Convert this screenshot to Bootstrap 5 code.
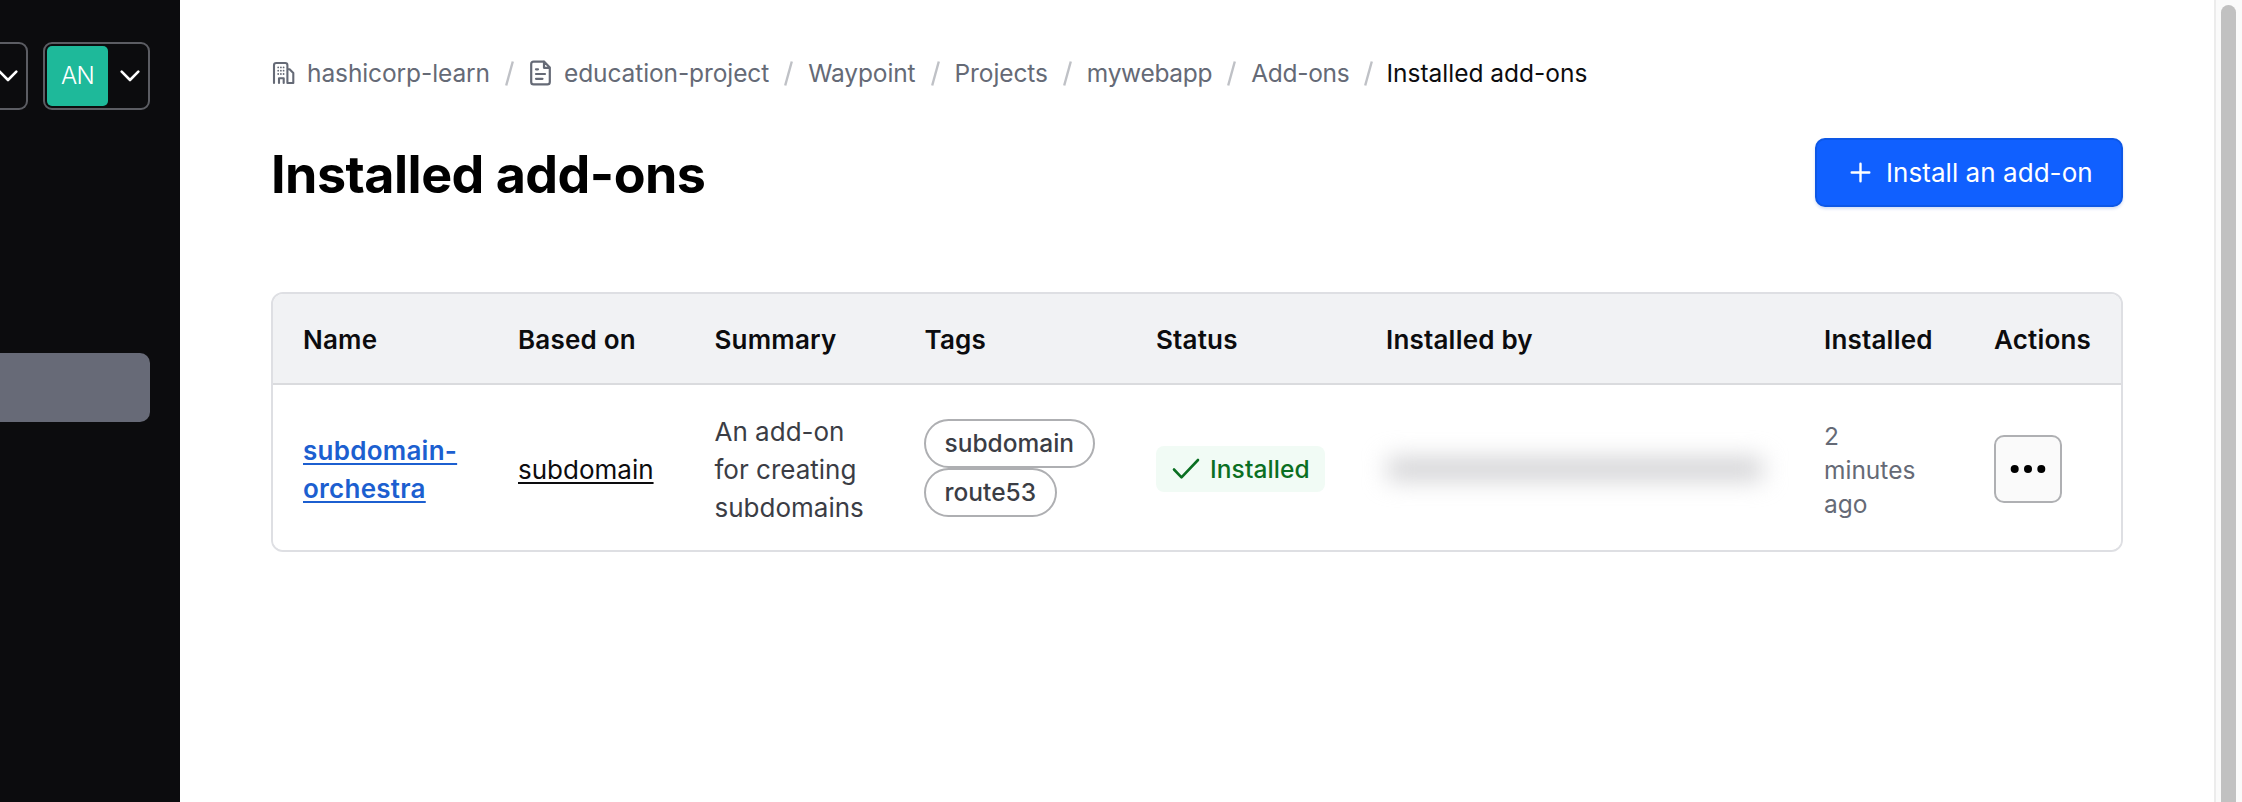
<!DOCTYPE html>
<html lang="en">
<head>
<meta charset="utf-8">
<meta name="viewport" content="width=device-width, initial-scale=1">
<title>Installed add-ons</title>
<link rel="stylesheet" href="https://cdn.jsdelivr.net/npm/bootstrap@5.3.0/dist/css/bootstrap.min.css">
<style>
  body { font-family: Inter, "Liberation Sans", sans-serif; color: #3b3d45; overflow: hidden; }
  .app-shell { height: 802px; }
  .side-panel { width: 180px; background: #0c0c0e; }
  .side-tools { padding-top: 42px; gap: 16px; }
  .tool-btn { height: 68px; border: 2px solid #5c5d63; border-radius: 9px; background: transparent; }
  .tool-org { width: 28px; padding-right: 8px; border-left: 0; border-radius: 0 9px 9px 0; overflow: hidden; }
  .tool-user { width: 107px; padding: 0 8px 0 2px; margin-left: -1px; }
  .avatar-tile { width: 61px; height: 60px; border-radius: 5px; background: #1eb99a; color: #fff; font-size: 24px; letter-spacing: -.8px; font-weight: 300; }
  .side-active { width: 150px; height: 69px; margin-top: 243px; border-radius: 0 10px 10px 0; background: #676a77; }

  .page-area { padding: 0 91px; }
  .crumbs { padding-top: 54px; height: 92px; font-size: 24.5px; line-height: 38px; color: #656a76; letter-spacing: -.1px; gap: 15px; }
  .crumbs .crumb { gap: 11px; white-space: nowrap; }
  .crumbs .crumb-tight { letter-spacing: -.3px; }
  .crumbs .crumb-current { color: #0c0c0e; letter-spacing: 0; margin-left: -2px; }
  .page-head { height: 200px; padding-top: 46px; }
  .page-title { margin: 3px 0 0 0; font-size: 52px; line-height: 68px; font-weight: 700; letter-spacing: -.52px; color: #000; }
  .btn-install { width: 308px; height: 69px; padding: 0 0 1px 33px; gap: 15px; font-size: 26px; letter-spacing: .05px; color: #fff; background: #1060ff; border: 2px solid #0d57e6; border-radius: 10px; box-shadow: 0 2px 3px rgba(20, 80, 200, .18); }

  .table-frame { height: 260px; border: 2px solid #dedfe3; border-radius: 12px; overflow: hidden; }
  .addons { table-layout: fixed; font-size: 26px; line-height: 38px; }
  .addons th, .addons td { padding: 1px 0 0 30px; vertical-align: middle; white-space: nowrap; }
  .addons th { height: 90px; padding-top: 2px; background: #f1f2f4; color: #0c0c0e; font-weight: 600; letter-spacing: .2px; border-bottom: 2px solid #dadbde; }
  .addons td { height: 166px; border: 0; background: #fff; color: #3b3d45; }
  .addons td.copy { padding-top: 4px; }
  .addons a { text-underline-offset: 3px; text-decoration-thickness: 2px; }
  .addons .link-name { color: #1c5fd0; font-weight: 600; letter-spacing: .25px; }
  .addons .link-base { color: #0c0c0e; letter-spacing: 0; }
  .tag-pill { height: 49px; padding: 0 19px 2px; margin-left: -1px; border: 2px solid #aeafb2; border-radius: 25px; font-size: 24.5px; font-weight: 500; letter-spacing: 0; }
  .status-ok { height: 46px; margin-top: 2px; padding: 0 15px 0 16px; gap: 10px; border-radius: 8px; background: #f1fbf5; color: #0a6f22; font-size: 24.5px; font-weight: 500; letter-spacing: .1px; }
  .masked { width: 374px; height: 20px; margin: 2px 0 0 2px; background: #cbcbce; filter: blur(12px); }
  .addons td.when { padding-top: 5px; font-size: 24.5px; line-height: 34.3px; color: #656a76; }
  .btn-more { width: 68px; height: 68px; margin-top: 1px; border: 2px solid #afb0b3; border-radius: 10px; background: #fafafa; }

  .scroll-track { width: 29px; padding: 5px 7px 0 5px; background: #fafafa; border-left: 2px solid #ececec; }
  .scroll-thumb { width: 15px; border-radius: 8px 8px 0 0; background: #c1c1c1; }
</style>
</head>
<body>
<div class="app-shell d-flex">
  <aside class="side-panel flex-shrink-0">
    <div class="side-tools d-flex">
      <button class="tool-btn tool-org d-flex align-items-center justify-content-end" aria-label="Switch organization">
        <svg class="flex-shrink-0" width="20" height="12" viewBox="0 0 20 12" fill="none" stroke="#fff" stroke-width="2.6" stroke-linecap="round" stroke-linejoin="round"><path d="M1.7 1.6 10 10 18.3 1.6"/></svg>
      </button>
      <button class="tool-btn tool-user d-flex align-items-center justify-content-between" aria-label="User menu">
        <span class="avatar-tile d-flex align-items-center justify-content-center">AN</span>
        <svg width="20" height="12" viewBox="0 0 20 12" fill="none" stroke="#fff" stroke-width="2.6" stroke-linecap="round" stroke-linejoin="round"><path d="M1.7 1.6 10 10 18.3 1.6"/></svg>
      </button>
    </div>
    <div class="side-active"></div>
  </aside>

  <main class="page-area flex-grow-1">
    <nav class="crumbs d-flex" aria-label="breadcrumb">
      <span class="crumb d-flex align-items-center">
        <svg width="25" height="24" viewBox="0 0 25 24" fill="none" stroke="#656a76" stroke-width="2.1" stroke-linecap="round" stroke-linejoin="round">
          <path d="M3 22V4.200Q3 2 5.200 2H14.200Q16.400 2 16.400 4.200V22M16.400 8.300H18.600L22.300 12V22H16.400M8 22V17.200H12.700V22"/>
          <path d="M7.200 6.400H13M7.200 9.700H13M7.200 13H13" stroke-width="1.8" stroke-dasharray="0 2.700"/>
        </svg>
        hashicorp-learn
      </span>
      <svg class="align-self-center" width="9" height="25" viewBox="0 0 9 25" stroke="#bfc1c6" stroke-width="2.400"><path d="M1.200 24.500 7.800 .5"/></svg>
      <span class="crumb d-flex align-items-center">
        <svg width="24" height="26" viewBox="0 0 24 26" fill="none" stroke="#656a76" stroke-width="2.200" stroke-linecap="round" stroke-linejoin="round">
          <path d="M15 1.600H4.600Q2.200 1.600 2.200 4V22Q2.200 24.400 4.600 24.400H18.400Q20.800 24.400 20.800 22V7.600L15 1.600V7.800H20.600M7 9.300H9M7 14H16M7 18.800H13.500"/>
        </svg>
        education-project
      </span>
      <svg class="align-self-center" width="9" height="25" viewBox="0 0 9 25" stroke="#bfc1c6" stroke-width="2.400"><path d="M1.200 24.500 7.800 .5"/></svg>
      <span class="crumb">Waypoint</span>
      <svg class="align-self-center" width="9" height="25" viewBox="0 0 9 25" stroke="#bfc1c6" stroke-width="2.400"><path d="M1.200 24.500 7.800 .5"/></svg>
      <span class="crumb">Projects</span>
      <svg class="align-self-center" width="9" height="25" viewBox="0 0 9 25" stroke="#bfc1c6" stroke-width="2.400"><path d="M1.200 24.500 7.800 .5"/></svg>
      <span class="crumb crumb-tight">mywebapp</span>
      <svg class="align-self-center" width="9" height="25" viewBox="0 0 9 25" stroke="#bfc1c6" stroke-width="2.400"><path d="M1.200 24.500 7.800 .5"/></svg>
      <span class="crumb crumb-tight">Add-ons</span>
      <svg class="align-self-center" width="9" height="25" viewBox="0 0 9 25" stroke="#bfc1c6" stroke-width="2.400"><path d="M1.200 24.500 7.800 .5"/></svg>
      <span class="crumb crumb-current">Installed add-ons</span>
    </nav>

    <header class="page-head d-flex justify-content-between align-items-start">
      <h1 class="page-title">Installed add-ons</h1>
      <button class="btn btn-install d-flex align-items-center">
        <svg width="21" height="21" viewBox="0 0 21 21" stroke="#fff" stroke-width="2.400" stroke-linecap="round"><path d="M10.500 1.700V19.300M1.700 10.500H19.300"/></svg>
        Install an add-on
      </button>
    </header>

    <div class="table-frame">
      <table class="table addons mb-0">
        <colgroup>
          <col style="width:215px"><col style="width:196.5px"><col style="width:210px"><col style="width:231.5px"><col style="width:230px"><col style="width:438px"><col style="width:170px"><col style="width:157px">
        </colgroup>
        <thead>
          <tr><th>Name</th><th>Based on</th><th>Summary</th><th>Tags</th><th>Status</th><th>Installed by</th><th>Installed</th><th>Actions</th></tr>
        </thead>
        <tbody>
          <tr>
            <td class="copy"><a class="link-name" href="#">subdomain-<br>orchestra</a></td>
            <td class="copy"><a class="link-base" href="#">subdomain</a></td>
            <td class="copy">An add-on<br>for creating<br>subdomains</td>
            <td>
              <div class="d-flex flex-column align-items-start">
                <span class="tag-pill d-flex align-items-center">subdomain</span>
                <span class="tag-pill d-flex align-items-center">route53</span>
              </div>
            </td>
            <td>
              <span class="status-ok d-inline-flex align-items-center align-middle">
                <svg width="28" height="22" viewBox="0 0 28 22" fill="none" stroke="#0a6f22" stroke-width="2.600" stroke-linecap="round" stroke-linejoin="round"><path d="M2 11.500 9.500 19.300 26 2"/></svg>
                Installed
              </span>
            </td>
            <td><div class="masked"></div></td>
            <td class="when">2<br>minutes<br>ago</td>
            <td>
              <button class="btn btn-more p-0 d-flex align-items-center justify-content-center" aria-label="More actions">
                <svg width="36" height="10" viewBox="0 0 36 10" fill="#000"><circle cx="4.700" cy="5" r="4"/><circle cx="18" cy="5" r="4"/><circle cx="31.300" cy="5" r="4"/></svg>
              </button>
            </td>
          </tr>
        </tbody>
      </table>
    </div>
  </main>

  <div class="scroll-track d-flex flex-shrink-0">
    <div class="scroll-thumb"></div>
  </div>
</div>
<script src="https://cdn.jsdelivr.net/npm/bootstrap@5.3.0/dist/js/bootstrap.bundle.min.js"></script>
</body>
</html>
